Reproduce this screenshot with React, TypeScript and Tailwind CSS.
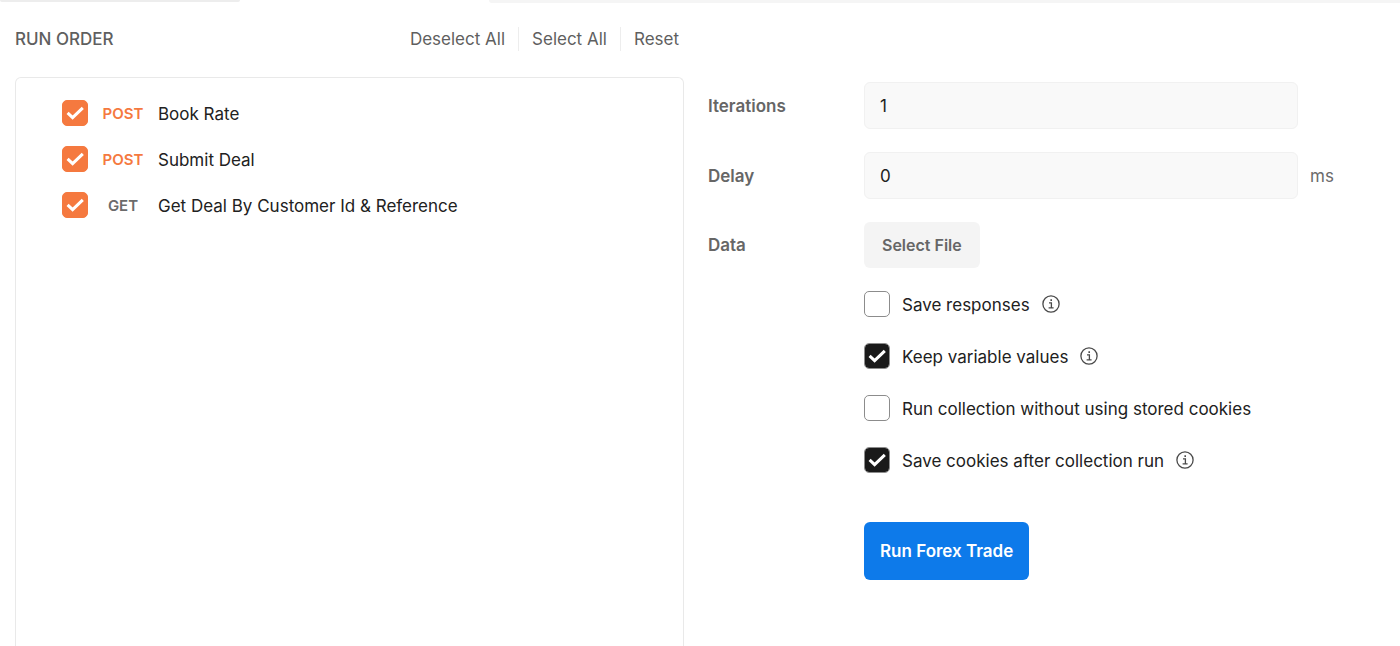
import { useId, useState } from "react";

type Request = { method: "POST" | "GET"; name: string };

const requests: Request[] = [
  { method: "POST", name: "Book Rate" },
  { method: "POST", name: "Submit Deal" },
  { method: "GET", name: "Get Deal By Customer Id & Reference" },
];

const options = [
  { label: "Save responses", checked: false, info: true },
  { label: "Keep variable values", checked: true, info: true },
  { label: "Run collection without using stored cookies", checked: false, info: false },
  { label: "Save cookies after collection run", checked: true, info: true },
];

function Checkbox({
  id,
  checked,
  onChange,
  tone,
}: {
  id: string;
  checked: boolean;
  onChange: (value: boolean) => void;
  tone: "orange" | "dark";
}) {
  const color =
    tone === "orange"
      ? "border-[#a0a0a0] checked:border-[#f5793f] checked:bg-[#f5793f]"
      : "border-[#8c8c8c] checked:border-[#8c8c8c] checked:bg-[#1a1a1a] checked:bg-clip-padding";
  return (
    <span className="grid size-[26px] shrink-0 place-items-center">
      <input
        id={id}
        type="checkbox"
        checked={checked}
        onChange={(e) => onChange(e.target.checked)}
        className={`peer col-start-1 row-start-1 size-[26px] appearance-none rounded-[5px] border bg-white ${color}`}
      />
      <svg
        viewBox="0 0 26 26"
        className="pointer-events-none col-start-1 row-start-1 hidden size-[26px] peer-checked:block"
        fill="none"
        stroke="#fff"
        strokeWidth="3"
        aria-hidden="true"
      >
        <path d="M5.6 12.9 L10.6 17.7 L20.8 7.8" />
      </svg>
    </span>
  );
}

function InfoIcon() {
  return (
    <svg viewBox="0 0 18 18" className="size-[18px] shrink-0" fill="none" stroke="#4a4a4a" aria-hidden="true">
      <circle cx="9" cy="9" r="8.1" strokeWidth="1.3" />
      <path d="M7 7.9 H9.4 V12.7 M6.6 12.8 H11.6" strokeWidth="1.3" />
      <path d="M8.4 5.1 H10" strokeWidth="1.6" />
    </svg>
  );
}

function RequestRow({ method, name }: Request) {
  const id = useId();
  const [checked, setChecked] = useState(true);
  return (
    <li className="flex h-[46px] items-center">
      <Checkbox id={id} checked={checked} onChange={setChecked} tone="orange" />
      <label htmlFor={id} className="flex items-center pt-0.5">
        <span
          className={`w-[70px] text-center text-[15px] font-semibold ${
            method === "POST" ? "text-[#f5793f]" : "text-[#6b6b6b]"
          }`}
        >
          {method}
        </span>
        <span className="text-[17px] text-[#212121]">{name}</span>
      </label>
    </li>
  );
}

function OptionRow({ label, checked: initial, info }: (typeof options)[number]) {
  const id = useId();
  const [checked, setChecked] = useState(initial);
  return (
    <div className="flex items-center gap-3">
      <Checkbox id={id} checked={checked} onChange={setChecked} tone="dark" />
      <label htmlFor={id} className="pt-0.5 text-[17px] text-[#212121]">
        {label}
      </label>
      {info && <InfoIcon />}
    </div>
  );
}

const fieldRow = "grid grid-cols-[156px_1fr_87px] items-center";
const fieldLabel = "text-[17px] font-semibold text-[#666666]";
const fieldInput =
  "h-[47px] w-full rounded-md border border-[#f1f1f1] bg-[#f9f9f9] px-[15px] text-[17px] text-[#212121]";

export default function App() {
  return (
    <main className="flex min-h-screen flex-col bg-white font-['Inter',sans-serif] leading-6">
      <div className="flex h-[3px] items-start">
        <div className="h-0.5 w-[240px] rounded-b-sm bg-[#ededed]" />
        <div className="ml-[249px] h-[3px] flex-1 rounded-bl-sm bg-[#f5f5f5]" />
      </div>
      <div className="grid flex-1 grid-cols-[669fr_677fr] gap-6 px-[15px]">
        <section className="flex flex-col">
          <header className="flex h-[74px] items-center justify-between pr-[5px] pb-0.5 text-[17px] text-[#5f5f5f]">
            <h2 className="font-medium">RUN ORDER</h2>
            <div className="flex items-center divide-x divide-[#ededed]">
              <button type="button" className="pr-[13px]">Deselect All</button>
              <button type="button" className="px-[13px]">Select All</button>
              <button type="button" className="pl-[13px]">Reset</button>
            </div>
          </header>
          <ul className="flex-1 rounded-t-md border border-b-0 border-[#e9e9e9] pt-3 pl-[46px]">
            {requests.map((request) => (
              <RequestRow key={request.name} {...request} />
            ))}
          </ul>
        </section>
        <form className="flex flex-col gap-[23px] pt-[79px]" onSubmit={(e) => e.preventDefault()}>
          <div className={fieldRow}>
            <label htmlFor="iterations" className={fieldLabel}>Iterations</label>
            <input id="iterations" type="text" defaultValue="1" className={fieldInput} />
          </div>
          <div className={fieldRow}>
            <label htmlFor="delay" className={fieldLabel}>Delay</label>
            <input id="delay" type="text" defaultValue="0" className={fieldInput} />
            <span className="pl-3 text-[17px] text-[#6b6b6b]">ms</span>
          </div>
          <div className={fieldRow}>
            <span className={fieldLabel}>Data</span>
            <button
              type="button"
              className="h-[46px] justify-self-start rounded-md bg-[#f4f4f4] px-[18px] text-base font-semibold text-[#666666]"
            >
              Select File
            </button>
          </div>
          <div className="flex flex-col gap-[26px] pl-[156px]">
            {options.map((option) => (
              <OptionRow key={option.label} {...option} />
            ))}
            <button
              type="submit"
              className="mt-[23px] h-[58px] self-start rounded-md bg-[#0d7aea] px-4 text-[17px] font-semibold text-white"
            >
              Run Forex Trade
            </button>
          </div>
        </form>
      </div>
    </main>
  );
}
